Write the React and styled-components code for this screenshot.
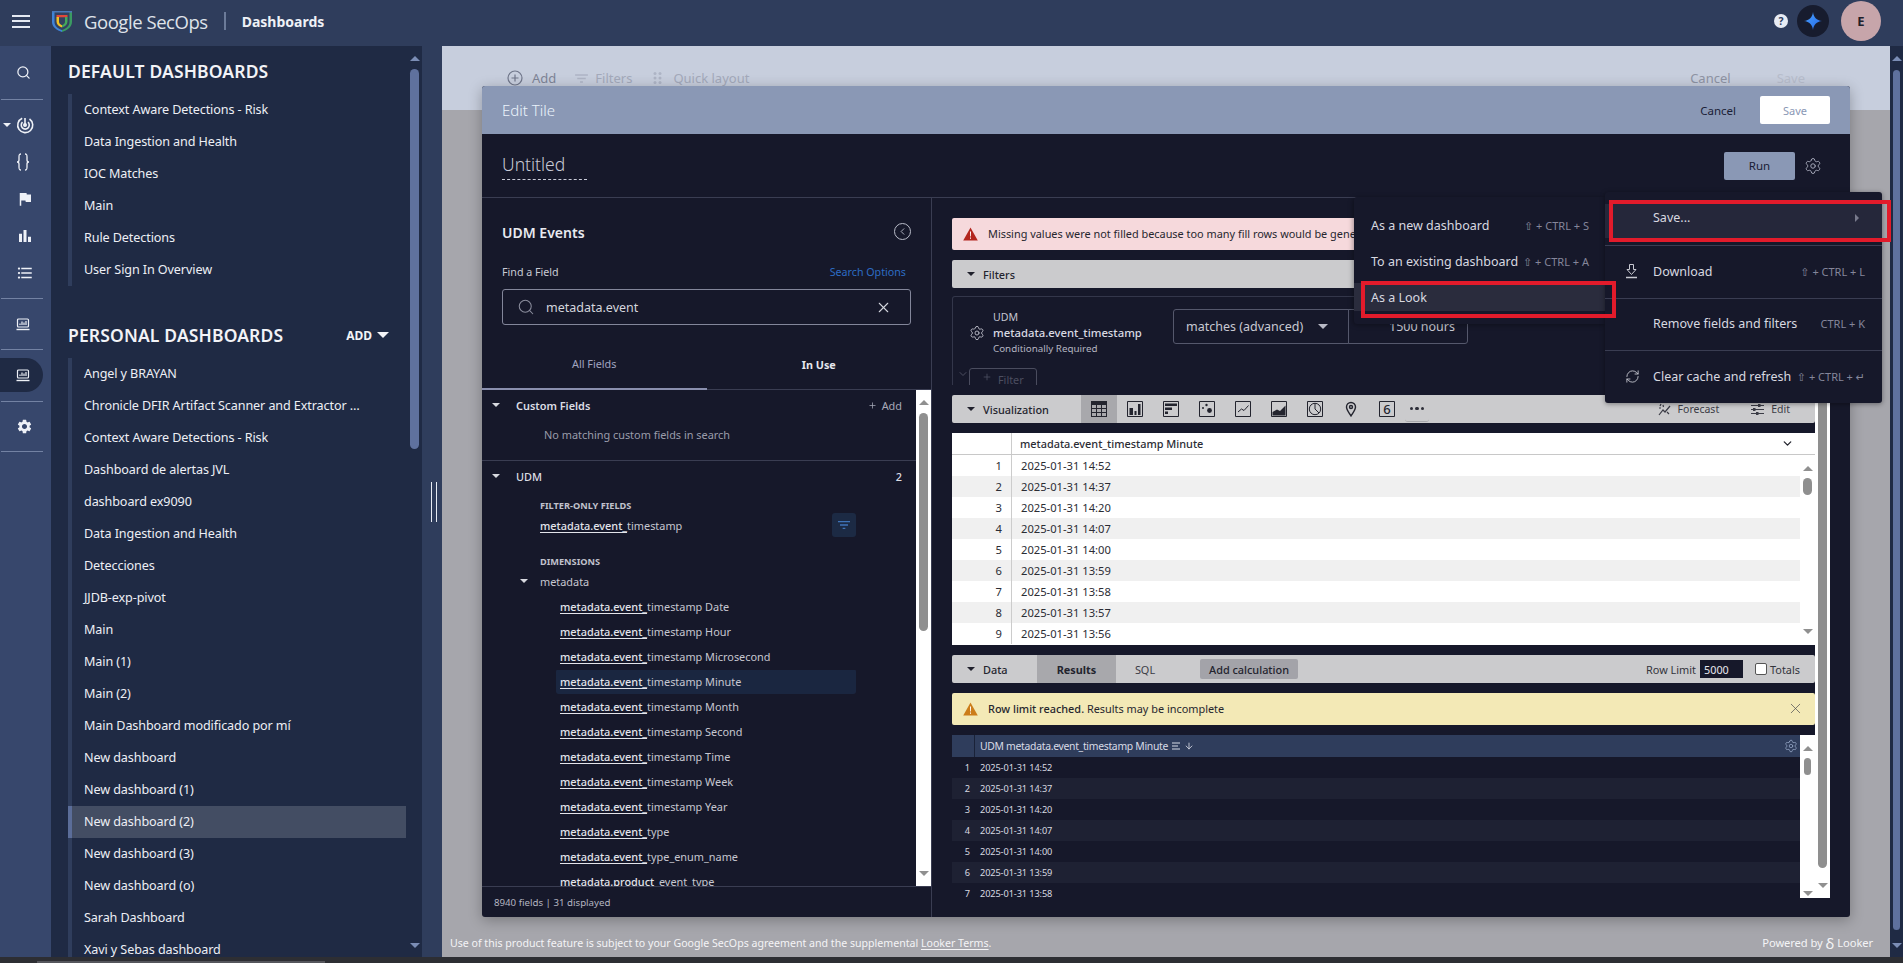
import React from "react";
import styled, { createGlobalStyle } from "styled-components";
import { Search, Settings, RefreshCw, X, ArrowDown, Plus, ChevronDown, ChevronLeft } from "lucide-react";
import { MdFlag, MdBarChart, MdFormatListBulleted, MdSettings, MdFilterList } from "react-icons/md";

const Global = createGlobalStyle`
  html, body { margin: 0; padding: 0; height: 963px; overflow: hidden; background: #2f3d5c; }
  * { box-sizing: border-box; }
  body { font-family: "Noto Sans", "Open Sans", sans-serif; font-size: 13px; color: #e8e8ee; }
`;

const Page = styled.div`
  width: 1903px; height: 963px; display: flex; flex-direction: column; overflow: hidden;
`;

/* ---------- top bar ---------- */
const TopBar = styled.header`
  height: 46px; flex: none; background: #2f3d5c; display: flex; align-items: center; padding: 0 0 4px 12px;
`;
const Burger = styled.div`
  width: 18px; height: 13px; display: flex; flex-direction: column; justify-content: space-between;
  & > i { display: block; height: 2px; background: #e4e9f2; }
`;
const LogoSlot = styled.div`
  margin-left: 21px; width: 22px; height: 24px; display: flex;
`;
const Wordmark = styled.div`
  margin-left: 11px; font-family: "Open Sans", sans-serif; font-size: 18.5px; letter-spacing: -0.45px; color: #dfe3ea; white-space: nowrap;
`;
const TopDivider = styled.div`
  width: 2px; height: 18px; background: #6c7b99; margin-left: 16px;
`;
const TopTitle = styled.div`
  margin: 1px 0 0 16px; font-weight: 700; font-size: 14px; color: #eef1f6;
`;
const TopRight = styled.div`
  margin-left: auto; display: flex; align-items: center; padding-right: 22px;
`;
const Help = styled.div`
  width: 14px; height: 14px; border-radius: 50%; background: #e8ecf4; color: #2f3d5c;
  font-size: 10.5px; font-weight: 700; display: flex; align-items: center; justify-content: center;
`;
const Spark = styled.div`
  width: 32px; height: 32px; border-radius: 50%; background: #171c2e; margin-left: 9px; display: flex; align-items: center; justify-content: center;
`;
const Avatar = styled.div`
  width: 40px; height: 40px; border-radius: 50%; background: #c7a5aa; color: #20202a; margin-left: 12px;
  display: flex; align-items: center; justify-content: center; font-weight: 700; font-size: 13px;
`;

/* ---------- body ---------- */
const Body = styled.div`
  flex: 1; display: flex; min-height: 0;
`;
const BottomStrip = styled.div`
  height: 6px; flex: none; background: #2d2e33; display: flex; align-items: flex-end;
  & > i { display: block; height: 2px; width: 288px; margin-left: 37px; background: #55565c; }
`;

const Rail = styled.nav`
  width: 51px; flex: none; background: #37476c; display: flex; flex-direction: column; color: #eef1f7;
`;
const RailItem = styled.div`
  height: ${p => p.$h || 37}px; width: 43px; padding-left: 16px; display: flex; align-items: center; position: relative;
  border-radius: 0 17px 17px 0; background: ${p => (p.$active ? "#1f2a44" : "transparent")};
  margin-top: ${p => p.$mt || 0}px;
`;
const RailCaret = styled.span`
  position: absolute; left: 3px; top: 50%; margin-top: -2px;
  border-left: 4px solid transparent; border-right: 4px solid transparent; border-top: 4px solid #eef1f7;
`;
const RailDivider = styled.hr`
  width: 42px; height: 1px; border: 0; background: #7382a3; margin: ${p => p.$m || 0}; margin-left: 1px; flex: none;
`;

const Sidebar = styled.aside`
  width: 371px; flex: none; background: #1f2a44; position: relative; overflow: hidden; padding-left: 17px;
`;
const SideHead = styled.div`
  display: flex; align-items: center; height: 24px; margin-top: ${p => p.$mt}px; width: 321px;
`;
const SideTitle = styled.h2`
  margin: 0; font-size: 17.5px; font-weight: 600; color: #f2f3f7; white-space: nowrap; letter-spacing: 0.15px;
`;
const AddLink = styled.div`
  margin-left: auto; display: flex; align-items: center; gap: 5px; font-weight: 700; font-size: 12px; color: #f2f3f7;
  & > i { border-left: 6.5px solid transparent; border-right: 6.5px solid transparent; border-top: 6px solid #f2f3f7; }
`;
const SideList = styled.ul`
  list-style: none; margin: ${p => p.$mt}px 0 0; padding: 0; width: 338px; border-left: 4px solid #2f3d5c;
`;
const SideRow = styled.li`
  height: 32px; display: flex; align-items: center; padding: 0 0 1px 12px; font-size: 12.6px; letter-spacing: -0.1px; color: #edeff5; white-space: nowrap;
  margin-left: -4px; border-left: 4px solid ${p => (p.$sel ? "#5b6d99" : "transparent")};
  background: ${p => (p.$sel ? "#434d63" : "transparent")};
`;
const SideBar = styled.div`
  position: absolute; right: 3px; top: 0; bottom: 0; width: 9px;
`;
const ArrowUp = styled.i`
  position: absolute; left: 50%; margin-left: -5px; top: ${p => p.$t}px;
  border-left: 5px solid transparent; border-right: 5px solid transparent; border-bottom: 5px solid ${p => p.$c};
`;
const ArrowDownTri = styled.i`
  position: absolute; left: 50%; margin-left: -5px; ${p => (p.$b != null ? `bottom: ${p.$b}px;` : `top: ${p.$t}px;`)}
  border-left: 5px solid transparent; border-right: 5px solid transparent; border-top: 5px solid ${p => p.$c};
`;
const Thumb = styled.i`
  position: absolute; left: 50%; border-radius: 5px; background: ${p => p.$c};
  width: ${p => p.$w}px; margin-left: -${p => p.$w / 2}px; top: ${p => p.$t}px; height: ${p => p.$h}px;
`;

const Gutter = styled.div`
  width: 20px; flex: none; background: #2f3d5c; display: flex; justify-content: center; padding-top: 436px;
  & > i { display: block; width: 6px; height: 40px; margin-left: 4px; border-left: 1px solid #e8ecf4; border-right: 1px solid #e8ecf4; }
`;

const Main = styled.main`
  flex: 1; position: relative; display: flex; flex-direction: column; min-width: 0;
`;
const DashHead = styled.div`
  height: 64px; flex: none; background: #c7cedd; display: flex; align-items: center; padding: 0 85px 0 65px; font-size: 13px;
`;
const DashTool = styled.span`
  display: inline-flex; align-items: center; gap: ${p => p.$gap}px; margin-right: ${p => p.$mr}px; color: ${p => p.$c};
`;
const DashRight = styled.div`
  margin-left: auto; display: flex; gap: 46px; color: #9ea3b2; font-size: 13px;
  & > b:first-child { color: #8e93a3; } & > b { font-weight: 400; } & > b:last-child { color: #b7bdcc; }
`;
const Canvas = styled.div`
  flex: 1; background: #a6a6ac; display: flex; align-items: flex-end; justify-content: space-between; padding: 0 17px 6px 8px;
  color: #f4f4f6; font-size: 10.6px; line-height: 16px;
  & u { text-underline-offset: 2px; }
`;
const Powered = styled.span`
  display: inline-flex; align-items: center; gap: 3px; font-size: 11.2px; letter-spacing: -0.1px;
  & > b { font-weight: 400; font-size: 15px; line-height: 14px; }
`;
const PageScroll = styled.div`
  width: 13px; flex: none; background: #1f2a44; position: relative;
`;

/* ---------- modal ---------- */
const Modal = styled.section`
  position: absolute; left: 40px; top: 40px; width: 1368px; height: 831px; display: flex; flex-direction: column;
  background: #16182a; border-radius: 3px; box-shadow: 0 3px 14px rgba(0,0,0,.28);
`;
const ModalHead = styled.div`
  height: 48px; flex: none; background: #8a98b5; border-radius: 3px 3px 0 0; display: flex; align-items: center; padding: 0 20px;
`;
const ModalTitle = styled.div`
  font-size: 15px; font-weight: 300; color: #eaf3fb;
`;
const HeadCancel = styled.div`
  margin-left: auto; color: #1a2036; font-size: 11.5px;
`;
const HeadSave = styled.div`
  width: 70px; height: 28px; margin-left: 24px; background: #fff; border-radius: 2px; color: #8a98b5; font-size: 11px;
  display: flex; align-items: center; justify-content: center;
`;
const TitleRow = styled.div`
  height: 64px; flex: none; border-bottom: 1px solid #3a3d52; display: flex; align-items: center; padding: 0 28px 0 20px;
`;
const Untitled = styled.div`
  width: 85px; height: 31px; margin-top: -2px; border-bottom: 1px dashed #c9cbd8; font-size: 17.5px; font-weight: 300; color: #c9cbd6; line-height: 30px;
`;
const RunBtn = styled.div`
  margin-left: auto; width: 71px; height: 28px; background: #8a98b5; border-radius: 2px; color: #1a2036; font-size: 11.5px;
  display: flex; align-items: center; justify-content: center;
`;
const GearSlot = styled.div`
  margin-left: 9px; color: #a5a8b8; display: flex;
`;
const Split = styled.div`
  flex: 1; display: flex; min-height: 0;
`;

/* left fields panel */
const FieldPanel = styled.div`
  width: 450px; flex: none; border-right: 1px solid #3a3d52; display: flex; flex-direction: column; min-height: 0;
`;
const FieldHead = styled.div`
  margin: 24px 20px 0; height: 20px; display: flex; align-items: center; justify-content: space-between;
  font-weight: 600; font-size: 14px; color: #e9eaf0;
`;
const BackCircle = styled.div`
  width: 17px; height: 17px; margin-top: -2px; border: 1.3px solid #b9bcc9; border-radius: 50%; color: #b9bcc9; display: flex; align-items: center; justify-content: center;
`;
const FindRow = styled.div`
  margin: 22px 25px 0 20px; height: 16px; display: flex; align-items: center; justify-content: space-between; font-size: 10.7px; color: #c9cad3;
  & > a { color: #2d6cc4; }
`;
const SearchBox = styled.div`
  margin: 9px 20px 0; height: 36px; border: 1px solid #83869a; border-radius: 3px; display: flex; align-items: center; padding: 0 18px 0 14px; color: #d4d5dd; font-size: 12.5px;
  & > span { margin-left: 11px; } & > svg:last-child { margin-left: auto; }
`;
const Tabs = styled.div`
  margin-top: 14px; height: 51px; flex: none; display: flex; border-bottom: 1px solid #3a3d52;
`;
const Tab = styled.div`
  width: 50%; display: flex; align-items: center; justify-content: center; font-size: 10.8px;
  color: ${p => (p.$on ? "#a0a4c0" : "#e6e7ee")}; font-weight: ${p => (p.$on ? 400 : 700)};
  border-bottom: ${p => (p.$on ? "2px solid #8a8fae" : "0")};
  margin-bottom: ${p => (p.$on ? "-1px" : "0")};
`;
const FieldScrollWrap = styled.div`
  flex: 1; min-height: 0; display: flex;
`;
const FieldList = styled.div`
  flex: 1; min-width: 0; overflow: hidden; font-size: 10.9px; color: #c6c7d0;
`;
const VScroll = styled.div`
  width: ${p => p.$w}px; flex: none; background: #fff; position: relative;
`;
const TreeHead = styled.div`
  height: 32px; display: flex; align-items: center; padding: 0 14px 2px 0; color: #dcdde4; font-weight: ${p => p.$bold ? 600 : 500};
  & > small { margin-left: auto; font-size: 10.9px; }
`;
const TreeCaret = styled.i`
  width: 0; height: 0; margin: 0 ${p => p.$mr || 16}px 0 ${p => p.$ml || 10}px; flex: none;
  border-left: 4px solid transparent; border-right: 4px solid transparent; border-top: 4px solid #d8d9e0;
`;
const AddField = styled.span`
  margin-left: auto; display: inline-flex; align-items: center; gap: 5px; color: #a7a9b8; font-weight: 400;
`;
const EmptyNote = styled.div`
  height: 24px; padding-left: 62px; display: flex; align-items: center; color: #9a9cab;
`;
const TreeRule = styled.div`
  height: 15px; border-bottom: 1px solid #3a3d52;
`;
const Kicker = styled.div`
  height: 16px; margin: ${p => p.$mt}px 0 0 58px; display: flex; align-items: center; font-size: 9.2px; font-weight: 700; color: #c0c1cc;
`;
const FilterOnly = styled.div`
  height: 24px; width: 374px; padding-left: 58px; display: flex; align-items: center; justify-content: space-between; color: #c6c7d0;
  u { color: #e3e4ea; text-underline-offset: 2px; font-weight: 500; }
`;
const FilterBtn = styled.div`
  width: 24px; height: 24px; border-radius: 3px; background: #1c2a44; color: #3f73b8; display: flex; align-items: center; justify-content: center;
`;
const GroupRow = styled.div`
  height: 24px; display: flex; align-items: center; color: #c6c7d0; padding-left: 28px;
`;
const FieldRows = styled.div`
  margin-top: 1px;
`;
const FieldRow = styled.div`
  height: 25px; width: 300px; margin-left: 74px; padding: 0 4px; display: flex; align-items: center; white-space: pre; border-radius: 3px;
  background: ${p => (p.$on ? "linear-gradient(#1a2640,#1a2640) center / 100% 24px no-repeat" : "none")};
  u { color: #e3e4ea; text-underline-offset: 2px; font-weight: 500; }
`;
const FieldFoot = styled.div`
  height: 31px; flex: none; border-top: 1px solid #3a3d52; padding-left: 12px; display: flex; align-items: center; font-size: 9.7px; color: #b4b5c1;
`;

/* right results panel */
const ResultPanel = styled.div`
  flex: 1; min-width: 0; display: flex; height: 700px;
`;
const ResultStack = styled.div`
  width: 883px; flex: none; padding: 20px 0 0 20px; display: flex; flex-direction: column; gap: 10px; overflow: hidden;
`;
const Banner = styled.div`
  height: 32px; flex: none; border-radius: 2px; background: ${p => p.$bg}; display: flex; align-items: center; padding: 0 0 1px 11px; color: #26262e; font-size: 10.9px; gap: 10px; position: relative; white-space: nowrap;
  & b { font-weight: 500; }
`;
const BannerClose = styled.span`
  margin-left: auto; margin-right: 11px; color: #4a4a50; display: flex;
`;
const SecBar = styled.div`
  height: 28px; flex: none; background: #cbcbcd; border-radius: 2px; display: flex; align-items: center; padding-left: 15px; color: #23242e; font-size: 10.9px; font-weight: 500;
`;
const SecCaret = styled.i`
  width: 0; height: 0; margin-right: 8px; flex: none;
  border-left: 4px solid transparent; border-right: 4px solid transparent; border-top: 4.5px solid #20212c;
`;
const SecLabel = styled.span`
  width: ${p => p.$w}px; flex: none;
`;
const FilterCard = styled.div`
  height: 89px; flex: none; margin-top: -2px; border: 1px solid #33364a; border-bottom: 0; border-radius: 3px 3px 0 0; overflow: hidden; position: relative; padding: 12px 0 0 16px;
`;
const FilterTop = styled.div`
  display: flex; align-items: flex-start; color: #b9bac6;
`;
const FilterGear = styled.span`
  display: flex; margin-top: 16px;
`;
const FilterNames = styled.div`
  width: 180px; margin-left: 8px; font-size: 10.6px; line-height: 16px; color: #c4c5cf;
  & > b { display: block; font-weight: 500; font-size: 11.3px; color: #d9dae2; } & > small { font-size: 9.8px; display: block; color: #b4b5c1; }
`;
const SelectBox = styled.div`
  width: 176px; height: 35px; border: 1px solid #55586c; border-radius: 3px 0 0 3px; display: flex; align-items: center; padding: 0 20px 0 12px; font-size: 12.5px; color: #c8c9d2; justify-content: space-between;
  & > i { border-left: 5px solid transparent; border-right: 5px solid transparent; border-top: 5px solid #b9bac6; }
`;
const ValueBox = styled.div`
  width: 120px; height: 35px; margin-left: -1px; border: 1px solid #55586c; border-radius: 0 3px 3px 0; display: flex; align-items: center; justify-content: flex-end; padding-right: 12px; font-size: 12.5px; color: #c8c9d2;
`;
const AddFilterRow = styled.div`
  display: flex; align-items: flex-start; margin: 11px 0 0 -12px; color: #4c4e60;
`;
const AddFilterBtn = styled.div`
  width: 68px; height: 30px; border: 1px solid #4a4c5e; border-radius: 3px; padding: 3px 0 0 12px; font-size: 10.8px; color: #4c4e60; display: flex; gap: 6px; align-items: flex-start;
`;
const VizIcon = styled.div`
  width: 36px; height: 28px; flex: none; display: flex; align-items: center; justify-content: center; color: #23242e;
  background: ${p => (p.$on ? "#a8a8ac" : "transparent")};
`;
const MoreBtn = styled.div`
  width: 24px; height: 26px; border-bottom: 1px solid #a8a8ac; border-radius: 3px; display: flex; align-items: center; justify-content: center; gap: 2px;
  & > i { width: 3.5px; height: 3.5px; border-radius: 50%; background: #2d2e38; }
`;
const BarAction = styled.span`
  display: inline-flex; align-items: center; gap: 7px; font-weight: 400; color: #3b3c46; font-size: 10.5px; margin-left: ${p => p.$ml || 0}px;
`;
const BarRight = styled.div`
  margin-left: auto; margin-right: 25px; display: flex; align-items: center;
`;
const VisTable = styled.div`
  height: 212px; flex: none; background: #fff; color: #2b2c34; position: relative; overflow: hidden;
`;
const VisHead = styled.div`
  height: 22px; border-bottom: 1px solid #c8c8c8; display: flex; align-items: center; font-size: 10.9px; padding-left: 59px; font-weight: 500;
  & > span { border-left: 1px solid #ccc; height: 21px; padding-left: 8px; flex: 1; display: flex; align-items: center; }
  & > i { display: flex; margin-right: 21px; color: #23242e; }
`;
const VisRow = styled.div`
  height: 21px; width: 848px; display: flex; align-items: center; font-size: 11.2px; background: ${p => (p.$alt ? "#f0f0f0" : "#fff")};
  & > b { width: 60px; text-align: right; padding-right: 9px; font-weight: 400; border-right: 1px solid #ccc; height: 100%; line-height: 21px; flex: none; }
  & > span { margin-left: 9px; }
`;
const InnerScroll = styled.div`
  position: absolute; right: 0; top: ${p => p.$t}px; bottom: 0; width: ${p => p.$w}px;
`;
const TabCell = styled.span`
  width: ${p => p.$w}px; height: 100%; flex: none; display: flex; align-items: center; justify-content: center;
  background: ${p => (p.$on ? "#a8a8ac" : "transparent")}; font-weight: ${p => (p.$on ? 700 : 400)}; color: ${p => (p.$on ? "#23242e" : "#3b3c46")};
`;
const AddCalc = styled.span`
  margin-left: 26px; width: 98px; height: 20px; background: #a3a3a9; border-radius: 2px; display: flex; align-items: center; justify-content: center; color: #23242e;
`;
const RowLimit = styled.div`
  margin-left: auto; margin-right: 15px; display: flex; align-items: center; color: #33343c; font-weight: 400;
`;
const LimitInput = styled.span`
  width: 43px; height: 18px; margin-left: 4px; background: #16182a; color: #e6e7ee; padding-left: 4px; display: flex; align-items: center; font-size: 10.8px;
`;
const TotalsBox = styled.i`
  width: 12px; height: 12px; margin: 0 3px 0 12px; background: #fff; border: 1px solid #555; border-radius: 2px;
`;
const ResultTable = styled.div`
  height: 163px; flex: none; position: relative; overflow: hidden; color: #d8d9e0;
`;
const ResHead = styled.div`
  height: 22px; width: 848px; background: #2f3d5c; display: flex; align-items: center; font-size: 10.4px; letter-spacing: -0.3px; color: #d8dbe6;
  & > b { width: 23px; height: 100%; border-right: 1px solid #1a2238; flex: none; }
  & > span { margin-left: 5px; display: inline-flex; align-items: center; gap: 3px; }
  & > i { margin-left: auto; margin-right: 2px; display: flex; color: #9fb0d0; }
`;
const ResRow = styled.div`
  height: 21px; width: 848px; display: flex; align-items: center; font-size: 9.2px; letter-spacing: -0.1px; background: ${p => (p.$alt ? "#1e2133" : "transparent")};
  & > b { width: 23px; font-weight: 400; text-align: right; padding-right: 5px; flex: none; }
  & > span { margin-left: 5px; }
`;
const ResSideWhite = styled.div`
  position: absolute; right: 0; top: 0; bottom: 0; width: 15px; background: #fff;
`;
const OuterScroll = styled.div`
  width: 15px; flex: none; background: #fff; position: relative; height: 700px;
`;

/* menus */
const Menu = styled.div`
  position: absolute; left: 1123px; top: 106px; width: 277px; height: 211px; background: #16182a; border-radius: 3px; box-shadow: 0 1px 5px rgba(0,0,0,.4); z-index: 5; display: flex; flex-direction: column;
`;
const MenuRow = styled.div`
  height: 53px; padding: 0 17px 1px 20px; display: flex; align-items: center; color: #d8d9e0; font-size: 12.5px;
  border-top: ${p => (p.$rule ? "1px solid #3a3d52" : "0")};
  background: ${p => (p.$hover ? "linear-gradient(#25273a,#25273a) center 12px / 100% 34px no-repeat" : "none")};
`;
const MenuIcon = styled.span`
  width: 28px; flex: none; display: flex; color: #c9cad3;
`;
const Shortcut = styled.span`
  margin-left: auto; color: #85869a; font-size: 11px; white-space: nowrap; font-family: "Noto Sans", "DejaVu Sans", sans-serif;
`;
const SaveTri = styled.i`
  margin-left: auto; margin-right: 6px; border-top: 4px solid transparent; border-bottom: 4px solid transparent; border-left: 4px solid #787a8c;
`;
const SubMenu = styled.div`
  position: absolute; left: 872px; top: 111px; width: 251px; height: 127px; padding-top: 10px; background: #16182a; border-radius: 3px 0 0 3px; box-shadow: -1px 1px 5px rgba(0,0,0,.35); z-index: 5;
`;
const SubRow = styled.div`
  height: 36px; padding: 0 16px 0 17px; display: flex; align-items: center; color: #d8d9e0; font-size: 12.5px;
  background: ${p => (p.$hover ? "linear-gradient(#2a2c3d,#2a2c3d) center / 100% 28px no-repeat" : "none")};
`;
const SaveMark = styled.div`
  position: absolute; left: 1127px; top: 114px; width: 282px; height: 42px; border: 4px solid #e21b2b; z-index: 6; pointer-events: none;
`;
const LookMark = styled.div`
  position: absolute; left: 879px; top: 195px; width: 255px; height: 37px; border: 4px solid #e21b2b; z-index: 6; pointer-events: none;
`;

/* ---------- drawings ---------- */
const Shield = () => (
  <svg width="22" height="24" viewBox="0 0 22 24" fill="none">
    <path d="M1 2 H21 V13 C21 18 16 21.5 11 23 C6 21.5 1 18 1 13 Z" fill="#33415f" />
    <path d="M1 2 H3.5 V13 C3.5 17 7 19.8 11 21 L11 23 C6 21.5 1 18 1 13 Z" fill="#3f83d8" />
    <path d="M11 21 C15 19.8 18.5 17 18.5 13 V2 H21 V13 C21 18 16 21.5 11 23 Z" fill="#3a9a62" />
    <path d="M1 2 H21 V3.5 H1 Z" fill="#4a78b8" />
    <path d="M5.5 6 H16.5 V8.3 H5.5 Z" fill="#e2483a" />
    <path d="M5.5 8 H8 V12.5 C8 14.2 9 15.5 11 16.3 L11 18.6 C7.8 17.5 5.5 15.4 5.5 12.5 Z" fill="#f3c224" />
    <path d="M14 8 H16.5 V12.5 C16.5 15.4 14.2 17.5 11 18.6 L11 16.3 C13 15.5 14 14.2 14 12.5 Z" fill="#44a85c" />
  </svg>
);
const Sparkle = () => (
  <svg width="20" height="20" viewBox="0 0 20 20">
    <defs><linearGradient id="sp" x1="0" y1="0" x2="1" y2="1"><stop offset="0" stopColor="#4aa3ff" /><stop offset="1" stopColor="#2468e8" /></linearGradient></defs>
    <path d="M10 1 C10.6 6.4 13.6 9.4 19 10 C13.6 10.6 10.6 13.6 10 19 C9.4 13.6 6.4 10.6 1 10 C6.4 9.4 9.4 6.4 10 1 Z" fill="url(#sp)" />
  </svg>
);
const Radar = () => (
  <svg width="18" height="18" viewBox="0 0 18 18" fill="none" stroke="currentColor" strokeWidth="1.6">
    <path d="M6.2 2.3 A7.5 7.5 0 1 0 13.5 3" />
    <path d="M6.5 6.2 A4 4 0 1 0 12 6.2" />
    <path d="M9 2 V9" /><circle cx="9" cy="9" r="1.2" fill="currentColor" />
  </svg>
);
const BracesIcon = () => (
  <svg width="14" height="18" viewBox="0 0 14 18" fill="none" stroke="currentColor" strokeWidth="1.3">
    <path d="M5 1 C3 1 3 2 3 4 V7 C3 8 2.5 9 1 9 C2.5 9 3 10 3 11 V14 C3 16 3 17 5 17" />
    <path d="M9 1 C11 1 11 2 11 4 V7 C11 8 11.5 9 13 9 C11.5 9 11 10 11 11 V14 C11 16 11 17 9 17" />
  </svg>
);
const LaptopChart = () => (
  <svg width="14" height="13" viewBox="0 0 14 13" fill="none" stroke="currentColor" strokeWidth="1.2">
    <rect x="1.5" y="1" width="11" height="8" rx="1" />
    <path d="M4 7 V5.5 M6 7 V3.5 M8 7 V4.5 M10 7 V3" />
    <path d="M0.5 11.5 H13.5" strokeWidth="1.4" />
  </svg>
);
const AlertTri = ({ c }) => (
  <svg width="15" height="14" viewBox="0 0 15 14"><path d="M7.5 0.5 L14.8 13.5 H0.2 Z" fill={c} /><path d="M7 4.5 H8 L7.9 9.5 H7.1 Z M7 10.5 H8 V11.8 H7 Z" fill="#fff" /></svg>
);
const VizGrid = () => (
  <svg width="16" height="16" viewBox="0 0 16 16" fill="none" stroke="currentColor" strokeWidth="1"><rect x=".5" y=".5" width="15" height="15" /><path d="M.5 3.5H15.5M.5 7.5H15.5M.5 11.5H15.5M5.5.5V15.5M10.5.5V15.5" /><path d="M.5 .5H15.5V3.5H.5Z" fill="currentColor" stroke="none" /></svg>
);
const VizBars = () => (
  <svg width="16" height="16" viewBox="0 0 16 16" fill="none" stroke="currentColor" strokeWidth="1"><path d="M.5.5V15.5H15.5V.5Z" /><path d="M2.5 14V7H6V14ZM7.5 14V10H9.5V14ZM11 14V3H13.5V14Z" fill="currentColor" stroke="none" /></svg>
);
const VizHBars = () => (
  <svg width="16" height="16" viewBox="0 0 16 16" fill="none" stroke="currentColor" strokeWidth="1"><path d="M.5.5V15.5H15.5V.5Z" /><path d="M2 2.5H14V5H2ZM2 6.5H9V9H2ZM2 10.5H5V13H2Z" fill="currentColor" stroke="none" /></svg>
);
const VizScatter = () => (
  <svg width="16" height="16" viewBox="0 0 16 16" fill="none" stroke="currentColor" strokeWidth="1"><path d="M.5.5V15.5H15.5V.5Z" /><circle cx="4" cy="7" r="1" fill="currentColor" stroke="none" /><circle cx="7.5" cy="4" r="1.2" fill="currentColor" stroke="none" /><circle cx="10.5" cy="9.5" r="2.4" fill="currentColor" stroke="none" /></svg>
);
const VizLine = () => (
  <svg width="16" height="16" viewBox="0 0 16 16" fill="none" stroke="currentColor" strokeWidth="1"><path d="M.5.5V15.5H15.5V.5Z" /><path d="M3 11 L6.5 8 L9 9.5 L13.5 4.5" /></svg>
);
const VizArea = () => (
  <svg width="16" height="16" viewBox="0 0 16 16" fill="none" stroke="currentColor" strokeWidth="1"><path d="M.5.5V15.5H15.5V.5Z" /><path d="M1.5 14.5V11L6 8.5L9 10L14.5 4.5V14.5Z" fill="currentColor" stroke="none" /></svg>
);
const VizPie = () => (
  <svg width="16" height="16" viewBox="0 0 16 16" fill="none" stroke="currentColor" strokeWidth="1"><path d="M.5.5V15.5H15.5V.5Z" /><circle cx="8" cy="8" r="5.7" /><path d="M8 2.3V8L12 12" /></svg>
);
const VizPin = () => (
  <svg width="16" height="16" viewBox="0 0 16 16" fill="none" stroke="currentColor" strokeWidth="1.4"><path d="M8 15 C5.5 11 3.5 8.7 3.5 6 A4.5 4.5 0 0 1 12.5 6 C12.5 8.7 10.5 11 8 15 Z" /><circle cx="8" cy="6" r="1.5" /></svg>
);
const VizSix = () => (
  <svg width="16" height="16" viewBox="0 0 16 16" fill="none" stroke="currentColor" strokeWidth="1"><path d="M.5.5V15.5H15.5V.5Z" /><text x="8" y="13" fontSize="13" textAnchor="middle" fill="currentColor" stroke="none" fontFamily="Noto Sans">6</text></svg>
);
const ForecastIcon = () => (
  <svg width="13" height="13" viewBox="0 0 13 13" fill="none" stroke="#3b3c46" strokeWidth="1.2"><path d="M1 12 L5 7 L7 9 L12 3" /><path d="M2 3 L3 1 M1 5 H3 M9 9 L11 11 M5 2 L5.5 4" /></svg>
);
const EditSliders = () => (
  <svg width="13" height="13" viewBox="0 0 13 13" fill="none" stroke="#3b3c46" strokeWidth="1.2"><path d="M0 2.5H13M0 6.5H13M0 10.5H13" /><rect x="7" y="1" width="2.5" height="3" fill="#3b3c46" stroke="none" /><rect x="2" y="5" width="2.5" height="3" fill="#3b3c46" stroke="none" /><rect x="5" y="9" width="2.5" height="3" fill="#3b3c46" stroke="none" /></svg>
);
const DownloadIcon = () => (
  <svg width="13" height="15" viewBox="0 0 13 15" fill="none"><path d="M4.5 .5H8.5V5.5H11L6.5 10.5L2 5.5H4.5Z" stroke="#c9cad3" strokeWidth="1" /><path d="M1 13.5H12" stroke="#c9cad3" strokeWidth="1.5" /></svg>
);
const CircleIcon = () => (
  <svg width="16" height="16" viewBox="0 0 16 16" fill="none" stroke="#70768a" strokeWidth="1.2"><circle cx="8" cy="8" r="7" /><path d="M8 4.5V11.5M4.5 8H11.5" /></svg>
);
const DotsIcon = () => (
  <svg width="12" height="14" viewBox="0 0 12 14" fill="#aeb4c5"><circle cx="3" cy="2.5" r="1.5"/><circle cx="8" cy="2.5" r="1.5"/><circle cx="3" cy="7" r="1.5"/><circle cx="8" cy="7" r="1.5"/><circle cx="3" cy="11.5" r="1.5"/><circle cx="8" cy="11.5" r="1.5"/></svg>
);
const HeadStack = () => (
  <svg width="10" height="9" viewBox="0 0 10 9" fill="none" stroke="#d8dbe6" strokeWidth="1.2"><path d="M1 1H9M1 4H7M1 7H9" /></svg>
);

const defaults = ["Context Aware Detections - Risk","Data Ingestion and Health","IOC Matches","Main","Rule Detections","User Sign In Overview"];
const personal = ["Angel y BRAYAN","Chronicle DFIR Artifact Scanner and Extractor …","Context Aware Detections - Risk","Dashboard de alertas JVL","dashboard ex9090","Data Ingestion and Health","Detecciones","JJDB-exp-pivot","Main","Main (1)","Main (2)","Main Dashboard modificado por mí","New dashboard","New dashboard (1)","New dashboard (2)","New dashboard (3)","New dashboard (o)","Sarah Dashboard","Xavi y Sebas dashboard"];
const fields = ["timestamp Date","timestamp Hour","timestamp Microsecond","timestamp Minute","timestamp Month","timestamp Second","timestamp Time","timestamp Week","timestamp Year","type","type_enum_name"];
const times = ["14:52","14:37","14:20","14:07","14:00","13:59","13:58","13:57","13:56"];

export default function App() {
  return (
    <Page>
      <Global />
      <TopBar>
        <Burger><i /><i /><i /></Burger>
        <LogoSlot><Shield /></LogoSlot>
        <Wordmark>Google SecOps</Wordmark>
        <TopDivider />
        <TopTitle>Dashboards</TopTitle>
        <TopRight>
          <Help>?</Help>
          <Spark><Sparkle /></Spark>
          <Avatar>E</Avatar>
        </TopRight>
      </TopBar>
      <Body>
        <Rail>
          <RailItem $h={53}><Search size={15} strokeWidth={2} /></RailItem>
          <RailDivider />
          <RailItem $mt={6}><RailCaret /><Radar /></RailItem>
          <RailItem><BracesIcon /></RailItem>
          <RailItem><MdFlag size={18} /></RailItem>
          <RailItem><MdBarChart size={18} /></RailItem>
          <RailItem><MdFormatListBulleted size={18} /></RailItem>
          <RailDivider $m="7px 0 0" />
          <RailItem $h={50}><LaptopChart /></RailItem>
          <RailDivider />
          <RailItem $h={34} $active $mt={8}><LaptopChart /></RailItem>
          <RailDivider $m="9px 0 0" />
          <RailItem $h={49}><MdSettings size={17} /></RailItem>
          <RailDivider />
        </Rail>
        <Sidebar>
          <SideHead $mt={13}><SideTitle>DEFAULT DASHBOARDS</SideTitle></SideHead>
          <SideList $mt={11}>{defaults.map(t => <SideRow key={t}>{t}</SideRow>)}</SideList>
          <SideHead $mt={37}>
            <SideTitle>PERSONAL DASHBOARDS</SideTitle>
            <AddLink>ADD<i /></AddLink>
          </SideHead>
          <SideList $mt={11}>{personal.map(t => <SideRow key={t} $sel={t === "New dashboard (2)"}>{t}</SideRow>)}</SideList>
          <SideBar>
            <ArrowUp $t={10} $c="#7b8db5" />
            <Thumb $c="#5f719e" $w={9} $t={23} $h={380} />
            <ArrowDownTri $b={9} $c="#7b8db5" />
          </SideBar>
        </Sidebar>
        <Gutter><i /></Gutter>
        <Main>
          <DashHead>
            <DashTool $gap={9} $mr={17} $c="#7e8496"><CircleIcon />Add</DashTool>
            <DashTool $gap={5} $mr={20} $c="#a3a9ba"><MdFilterList size={17} color="#aeb4c5" />Filters</DashTool>
            <DashTool $gap={9} $mr={0} $c="#a3a9ba"><DotsIcon />Quick layout</DashTool>
            <DashRight><b>Cancel</b><b>Save</b></DashRight>
          </DashHead>
          <Canvas>
            <span>Use of this product feature is subject to your Google SecOps agreement and the supplemental <u>Looker Terms</u>.</span>
            <Powered>Powered by <b>&#948;</b> Looker</Powered>
          </Canvas>
          <Modal>
            <ModalHead>
              <ModalTitle>Edit Tile</ModalTitle>
              <HeadCancel>Cancel</HeadCancel>
              <HeadSave>Save</HeadSave>
            </ModalHead>
            <TitleRow>
              <Untitled>Untitled</Untitled>
              <RunBtn>Run</RunBtn>
              <GearSlot><Settings size={18} strokeWidth={1.3} /></GearSlot>
            </TitleRow>
            <Split>
              <FieldPanel>
                <FieldHead>UDM Events<BackCircle><ChevronLeft size={11} /></BackCircle></FieldHead>
                <FindRow>Find a Field<a>Search Options</a></FindRow>
                <SearchBox><Search size={18} strokeWidth={1.4} color="#8a8c9c" /><span>metadata.event</span><X size={17} strokeWidth={1.5} /></SearchBox>
                <Tabs><Tab $on>All Fields</Tab><Tab>In Use</Tab></Tabs>
                <FieldScrollWrap>
                  <FieldList>
                    <TreeHead $bold><TreeCaret />Custom Fields<AddField><Plus size={9} />Add</AddField></TreeHead>
                    <EmptyNote>No matching custom fields in search</EmptyNote>
                    <TreeRule />
                    <TreeHead><TreeCaret />UDM<small>2</small></TreeHead>
                    <Kicker $mt={4}>FILTER-ONLY FIELDS</Kicker>
                    <FilterOnly><span><u>metadata.event_</u>timestamp</span><FilterBtn><MdFilterList size={16} /></FilterBtn></FilterOnly>
                    <Kicker $mt={16}>DIMENSIONS</Kicker>
                    <GroupRow><TreeCaret $ml={10} $mr={12} />metadata</GroupRow>
                    <FieldRows>
                      {fields.map(f => <FieldRow key={f} $on={f === "timestamp Minute"}><u>metadata.event_</u>{f}</FieldRow>)}
                      <FieldRow><u>metadata.product_</u>event_type</FieldRow>
                    </FieldRows>
                  </FieldList>
                  <VScroll $w={15}>
                    <ArrowUp $t={10} $c="#909090" />
                    <Thumb $c="#8f8f8f" $w={9} $t={23} $h={218} />
                    <ArrowDownTri $b={10} $c="#909090" />
                  </VScroll>
                </FieldScrollWrap>
                <FieldFoot>8940 fields | 31 displayed</FieldFoot>
              </FieldPanel>
              <ResultPanel>
                <ResultStack>
                  <Banner $bg="#f6d9dc"><AlertTri c="#b3261e" /><span>Missing values were not filled because too many fill rows would be generated</span></Banner>
                  <SecBar><SecCaret />Filters</SecBar>
                  <FilterCard>
                    <FilterTop>
                      <FilterGear><Settings size={16} strokeWidth={1.4} /></FilterGear>
                      <FilterNames>UDM<b>metadata.event_timestamp</b><small>Conditionally Required</small></FilterNames>
                      <SelectBox>matches (advanced)<i /></SelectBox>
                      <ValueBox>1500 hours</ValueBox>
                    </FilterTop>
                    <AddFilterRow><ChevronDown size={12} /><AddFilterBtn><Plus size={10} />Filter</AddFilterBtn></AddFilterRow>
                  </FilterCard>
                  <SecBar>
                    <SecCaret /><SecLabel $w={98}>Visualization</SecLabel>
                    <VizIcon $on><VizGrid /></VizIcon><VizIcon><VizBars /></VizIcon><VizIcon><VizHBars /></VizIcon><VizIcon><VizScatter /></VizIcon><VizIcon><VizLine /></VizIcon><VizIcon><VizArea /></VizIcon><VizIcon><VizPie /></VizIcon><VizIcon><VizPin /></VizIcon><VizIcon><VizSix /></VizIcon>
                    <MoreBtn><i /><i /><i /></MoreBtn>
                    <BarRight><BarAction><ForecastIcon />Forecast</BarAction><BarAction $ml={32}><EditSliders />Edit</BarAction></BarRight>
                  </SecBar>
                  <VisTable>
                    <VisHead><span>metadata.event_timestamp Minute</span><i><ChevronDown size={13} strokeWidth={2.4} /></i></VisHead>
                    {times.map((t, i) => <VisRow key={t} $alt={i % 2 === 1}><b>{i + 1}</b><span>2025-01-31 {t}</span></VisRow>)}
                    <InnerScroll $t={22} $w={15}>
                      <ArrowUp $t={11} $c="#909090" />
                      <Thumb $c="#8f8f8f" $w={9} $t={23} $h={17} />
                      <ArrowDownTri $b={11} $c="#909090" />
                    </InnerScroll>
                  </VisTable>
                  <SecBar>
                    <SecCaret /><SecLabel $w={54}>Data</SecLabel>
                    <TabCell $w={79} $on>Results</TabCell><TabCell $w={58}>SQL</TabCell>
                    <AddCalc>Add calculation</AddCalc>
                    <RowLimit>Row Limit<LimitInput>5000</LimitInput><TotalsBox />Totals</RowLimit>
                  </SecBar>
                  <Banner $bg="#f3e9b6"><AlertTri c="#cc7d1a" /><span><b>Row limit reached.</b> Results may be incomplete</span><BannerClose><X size={17} strokeWidth={1} /></BannerClose></Banner>
                  <ResultTable>
                    <ResHead><b /><span>UDM metadata.event_timestamp Minute <HeadStack /><ArrowDown size={10} /></span><i><Settings size={14} strokeWidth={1.2} /></i></ResHead>
                    {times.slice(0, 7).map((t, i) => <ResRow key={t} $alt={i % 2 === 1}><b>{i + 1}</b><span>2025-01-31 {t}</span></ResRow>)}
                    <ResSideWhite>
                      <ArrowUp $t={11} $c="#909090" />
                      <Thumb $c="#8f8f8f" $w={7} $t={23} $h={17} />
                      <ArrowDownTri $b={2} $c="#909090" />
                    </ResSideWhite>
                  </ResultTable>
                </ResultStack>
                <OuterScroll>
                  <Thumb $c="#8f8f8f" $w={9} $t={0} $h={670} />
                  <ArrowDownTri $b={10} $c="#909090" />
                </OuterScroll>
              </ResultPanel>
            </Split>
            <SubMenu>
              <SubRow>As a new dashboard<Shortcut>⇧ + CTRL + S</Shortcut></SubRow>
              <SubRow>To an existing dashboard<Shortcut>⇧ + CTRL + A</Shortcut></SubRow>
              <SubRow $hover>As a Look</SubRow>
            </SubMenu>
            <Menu>
              <MenuRow $hover><MenuIcon />Save...<SaveTri /></MenuRow>
              <MenuRow $rule><MenuIcon><DownloadIcon /></MenuIcon>Download<Shortcut>⇧ + CTRL + L</Shortcut></MenuRow>
              <MenuRow $rule><MenuIcon />Remove fields and filters<Shortcut>CTRL + K</Shortcut></MenuRow>
              <MenuRow $rule><MenuIcon><RefreshCw size={15} strokeWidth={1.4} /></MenuIcon>Clear cache and refresh<Shortcut>⇧ + CTRL + ↵</Shortcut></MenuRow>
            </Menu>
            <SaveMark />
            <LookMark />
          </Modal>
        </Main>
        <PageScroll>
          <ArrowUp $t={10} $c="#7b8db5" />
          <Thumb $c="#5f719e" $w={7} $t={24} $h={860} />
          <ArrowDownTri $b={9} $c="#7b8db5" />
        </PageScroll>
      </Body>
      <BottomStrip><i /></BottomStrip>
    </Page>
  );
}
